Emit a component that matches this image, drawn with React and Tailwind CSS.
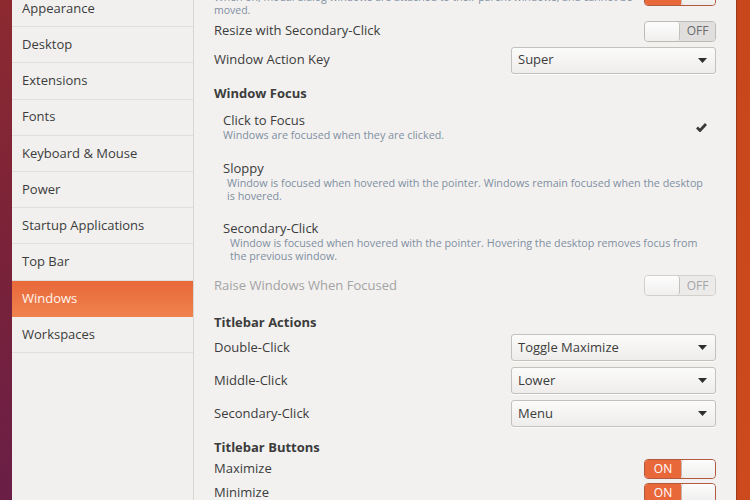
import React from "react";

const font = { fontFamily: '"Open Sans", "Noto Sans", sans-serif' };

const sidebarItems = [
  "Appearance",
  "Desktop",
  "Extensions",
  "Fonts",
  "Keyboard & Mouse",
  "Power",
  "Startup Applications",
  "Top Bar",
  "Windows",
  "Workspaces",
];

const Arrow = () => (
  <svg width="9" height="5" viewBox="0 0 9 5" className="shrink-0">
    <path d="M0 0 L9 0 L4.5 5 Z" fill="#2e2e2e" />
  </svg>
);

const Combo = ({ value }) => (
  <div className="flex h-[27px] w-[205px] items-center justify-between rounded-[3px] border border-[#c4c1bd] bg-gradient-to-b from-[#fbfbfa] to-[#eeedec] pl-[6px] pr-[8px] text-[13px] text-[#3c3c3c] shadow-[0_1px_0_rgba(255,255,255,0.8)]">
    <span>{value}</span>
    <Arrow />
  </div>
);

const Toggle = ({ on, disabled }) => {
  if (on) {
    return (
      <div className="flex h-[20px] w-[72px] shrink-0 overflow-hidden rounded-[4px] border border-[#b25a40]">
        <div className="flex w-[36px] items-center justify-center bg-[#e9683a] text-[12px] text-white">
          ON
        </div>
        <div className="flex-1 rounded-[3px] border-l border-[#c9b8b2] bg-gradient-to-b from-[#fdfdfd] to-[#efeeed]" />
      </div>
    );
  }
  return (
    <div
      className={`flex h-[21px] w-[72px] shrink-0 overflow-hidden rounded-[4px] border ${
        disabled ? "border-[#d2d0cd]" : "border-[#bdbab6]"
      }`}
    >
      <div className="w-[35px] rounded-[3px] border-r border-[#c4c1bd] bg-gradient-to-b from-[#fdfdfd] to-[#f0efee]" />
      <div
        className={`flex flex-1 items-center justify-center text-[12px] ${
          disabled ? "bg-[#ecebea] text-[#a5a5a5]" : "bg-[#e0dfdd] text-[#6a6a6a]"
        }`}
      >
        OFF
      </div>
    </div>
  );
};

const Row = ({ label, children, className = "", muted }) => (
  <div className={`flex h-[28px] items-center justify-between ${className}`}>
    <span className={`text-[13px] ${muted ? "text-[#a3a3a3]" : "text-[#3c3c3c]"}`}>
      {label}
    </span>
    {children}
  </div>
);

const Heading = ({ children, className = "" }) => (
  <div className={`flex h-[18px] items-center text-[13px] font-bold text-[#3c3c3c] ${className}`}>
    {children}
  </div>
);

const FocusOption = ({ title, lines, indent, checked, className = "" }) => (
  <div className={`flex items-center justify-between pl-[9px] ${className}`}>
    <div>
      <div className="flex h-[16px] items-center text-[13px] text-[#3c3c3c]">{title}</div>
      <div className={`whitespace-nowrap text-[10.75px] leading-[13.5px] text-[#7f8fa0] ${indent}`}>
        {lines.map((l, i) => (
          <div key={i}>{l}</div>
        ))}
      </div>
    </div>
    {checked && (
      <svg width="11" height="9" viewBox="0 0 11 9" className="mr-[9px]">
        <path d="M1 4.5 L4 7.5 L10 1" stroke="#3a3a3a" strokeWidth="2.8" fill="none" />
      </svg>
    )}
  </div>
);

export default function App() {
  return (
    <div className="flex h-[500px] w-[750px] overflow-hidden" style={font}>
      {/* desktop on the left */}
      <div className="w-[12px] bg-gradient-to-b from-[#8d2a30] via-[#7a2239] to-[#6a1e46]" />

      {/* window */}
      <div className="flex w-[724px] bg-[#f2f1f0]">
        <aside className="w-[182px] shrink-0 border-r border-[#d9d7d4] bg-[#f1f0ef]">
          <div className="-mt-[9px]">
            {sidebarItems.map((item) => (
              <div
                key={item}
                className={`flex h-[36.2px] items-center pl-[10px] text-[13px] ${
                  item === "Windows"
                    ? "bg-gradient-to-b from-[#e8683a] to-[#f0824e] text-[#fff5ee]"
                    : "border-b border-[#e1dfdc] text-[#3c3c3c]"
                }`}
              >
                {item}
              </div>
            ))}
          </div>
        </aside>

        <main className="flex-1 px-[20px]">
          <div className="-mt-[26px] flex flex-col">
            {/* Attach modal dialogs */}
            <div className="flex items-center justify-between gap-[8px]">
              <div className="min-w-0">
                <div className="flex h-[17px] items-center text-[13px] text-[#3c3c3c]">
                  Attach Modal Dialogs
                </div>
                <div className="whitespace-nowrap text-[10.5px] leading-[13px] text-[#7f8fa0]">
                  When on, modal dialog windows are attached to their parent windows, and cannot be
                  <br />
                  moved.
                </div>
              </div>
              <Toggle on />
            </div>

            <Row label="Resize with Secondary-Click">
              <Toggle />
            </Row>
            <Row label="Window Action Key" className="mt-[1px]">
              <Combo value="Super" />
            </Row>

            <Heading className="mt-[11px]">Window Focus</Heading>

            <FocusOption
              className="mt-[10px]"
              title="Click to Focus"
              lines={["Windows are focused when they are clicked."]}
              indent=""
              checked
            />
            <FocusOption
              className="mt-[18px]"
              title="Sloppy"
              lines={[
                "Window is focused when hovered with the pointer. Windows remain focused when the desktop",
                "is hovered.",
              ]}
              indent="pl-[4px]"
            />
            <FocusOption
              className="mt-[17px]"
              title="Secondary-Click"
              lines={[
                "Window is focused when hovered with the pointer. Hovering the desktop removes focus from",
                "the previous window.",
              ]}
              indent="pl-[7px]"
            />

            <Row label="Raise Windows When Focused" className="mt-[8px]" muted>
              <Toggle disabled />
            </Row>

            <Heading className="mt-[14px]">Titlebar Actions</Heading>
            <Row label="Double-Click" className="mt-[2px]">
              <Combo value="Toggle Maximize" />
            </Row>
            <Row label="Middle-Click" className="mt-[5px]">
              <Combo value="Lower" />
            </Row>
            <Row label="Secondary-Click" className="mt-[5px]">
              <Combo value="Menu" />
            </Row>

            <Heading className="mt-[11px]">Titlebar Buttons</Heading>
            <Row label="Maximize" className="mt-[1px] !h-[22px]">
              <Toggle on />
            </Row>
            <Row label="Minimize" className="mt-[2px] !h-[22px]">
              <Toggle on />
            </Row>
          </div>
        </main>
      </div>

      {/* desktop on the right */}
      <div className="flex-1 border-l border-[#9e3a18] bg-gradient-to-b from-[#c7461b] to-[#cc4a1d]" />
    </div>
  );
}
